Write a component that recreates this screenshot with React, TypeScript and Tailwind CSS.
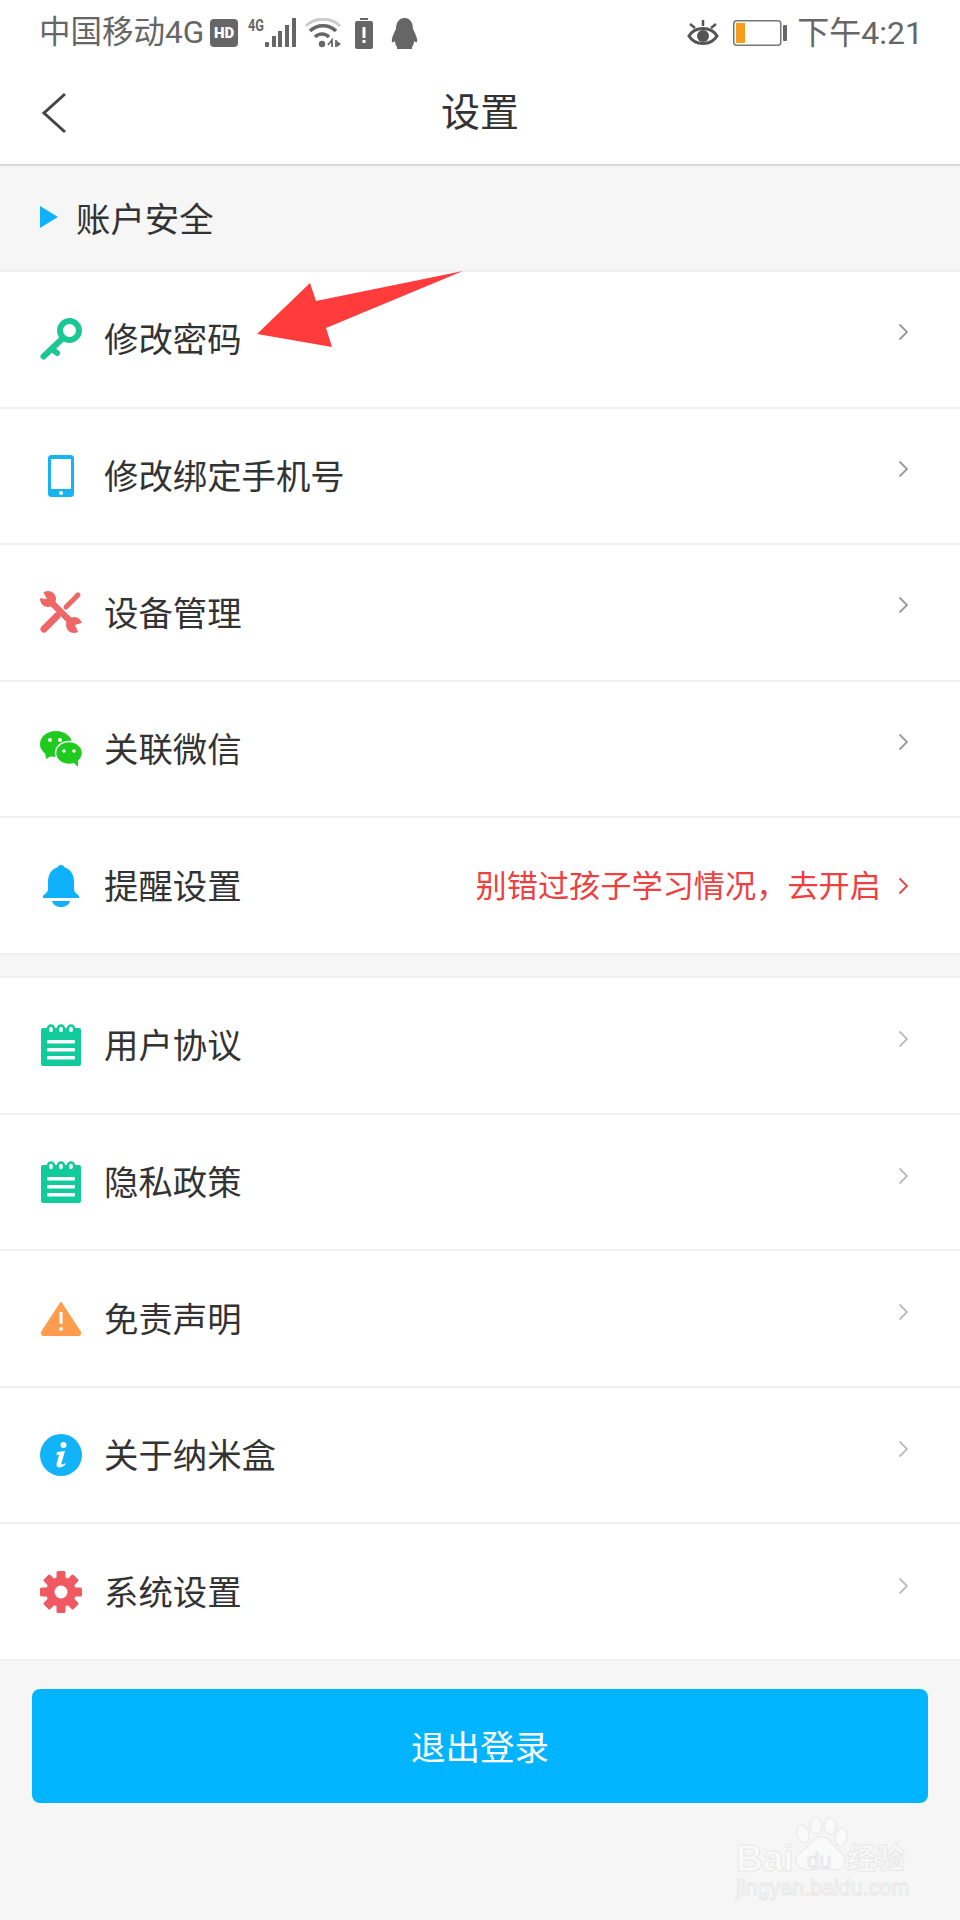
import React from 'react';

const cjk = { fontFamily: '"Noto Sans CJK SC", sans-serif' };

function HdIcon() {
  return (
    <div className="flex h-[28px] w-[28px] shrink-0 items-center justify-center rounded-[4px] bg-[#666] text-[15px] font-black leading-none text-white [font-family:Roboto,sans-serif]">
      HD
    </div>
  );
}

function SignalIcon() {
  return (
    <svg width="48" height="30" viewBox="0 0 48 30" className="shrink-0">
      <text x="0" y="13" fontSize="16" fontWeight="700" fill="#666" textLength="16" lengthAdjust="spacingAndGlyphs" fontFamily="Roboto, sans-serif">4G</text>
      <rect x="17" y="24" width="4" height="5" rx="1" fill="#666" />
      <rect x="24" y="18" width="4" height="11" fill="#666" />
      <rect x="30" y="13" width="4" height="16" fill="#666" />
      <rect x="37" y="7" width="4" height="22" fill="#666" />
      <rect x="44" y="0" width="4" height="29" fill="#666" />
    </svg>
  );
}

function WifiIcon() {
  return (
    <svg width="36" height="30" viewBox="0 0 36 30" fill="none" className="shrink-0">
      <path d="M1 8 C10 -1 26 -1 35 8" stroke="#ccc" strokeWidth="3" />
      <path d="M5 13 C12 6 24 6 31 13" stroke="#666" strokeWidth="3.5" />
      <path d="M10 19 C14 15 20 15 24 19" stroke="#666" strokeWidth="3.5" />
      <circle cx="17" cy="26" r="3.2" fill="#666" />
      <path d="M23 27 L27 22 L27 29 M31 22 L31 29" stroke="#666" strokeWidth="1.8" />
      <path d="M32 23 L36 26 L32 29 Z" fill="#666" />
    </svg>
  );
}

function ChargeIcon() {
  return (
    <svg width="18" height="31" viewBox="0 0 18 31" className="shrink-0">
      <rect x="5" y="0" width="8" height="2" fill="#666" />
      <rect x="0" y="3" width="18" height="28" rx="2" fill="#666" />
      <rect x="7.5" y="9" width="3" height="11" fill="#fff" />
      <rect x="7.5" y="22" width="3" height="3" fill="#fff" />
    </svg>
  );
}

function QqIcon() {
  return (
    <svg width="27" height="31" viewBox="0 0 27 31" className="shrink-0">
      <path d="M13.5 0 C20 0 22 6 22 11 C24 15 27 21 26 24 C25 25 23 23 23 23 C23 26 22 28 21 29 L21 31 L6 31 L6 29 C5 28 4 26 4 23 C4 23 2 25 1 24 C0 21 3 15 5 11 C5 6 7 0 13.5 0 Z" fill="#666" />
    </svg>
  );
}

function EyeIcon() {
  return (
    <svg width="32" height="28" viewBox="0 0 32 28" fill="none" className="shrink-0">
      <path d="M2 17 C8 7 24 7 30 17 C24 27 8 27 2 17 Z" stroke="#555" strokeWidth="3" />
      <circle cx="16" cy="17" r="6" fill="#555" />
      <path d="M16 1 V7 M3 5 L8 9 M29 5 L24 9" stroke="#555" strokeWidth="2.5" />
    </svg>
  );
}

function BatteryIcon() {
  return (
    <svg width="54" height="26" viewBox="0 0 54 26" className="shrink-0">
      <rect x="0.75" y="0.75" width="47" height="24.5" rx="3" fill="#fff" stroke="#777" strokeWidth="1.5" />
      <rect x="3" y="3" width="9" height="20" fill="#f59c1a" />
      <rect x="50" y="5" width="4" height="16" rx="1" fill="#666" />
    </svg>
  );
}

function KeyIcon() {
  return (
    <svg width="42" height="42" viewBox="0 0 42 42" fill="none">
      <circle cx="29.5" cy="12.5" r="9.5" stroke="#1cc796" strokeWidth="6" />
      <path d="M23 20 L3.5 38.5 M12 31 L17 35" stroke="#1cc796" strokeWidth="6" strokeLinecap="round" />
    </svg>
  );
}

function PhoneIcon() {
  return (
    <svg width="42" height="42" viewBox="0 0 42 42">
      <rect x="8" y="0" width="26" height="42" rx="3.5" fill="#14b4f5" />
      <rect x="11" y="4" width="20" height="30" fill="#fff" />
      <circle cx="21" cy="38" r="2" fill="#fff" />
    </svg>
  );
}

function ToolsIcon() {
  return (
    <svg width="42" height="42" viewBox="0 0 42 42" fill="none">
      <path d="M4 38 L17 25" stroke="#ee6666" strokeWidth="7" strokeLinecap="round" />
      <path d="M26 16 L38 4" stroke="#ee6666" strokeWidth="5" strokeLinecap="round" />
      <path d="M8 8 L34 34" stroke="#ee6666" strokeWidth="6.5" />
      <circle cx="8" cy="8" r="8" fill="#ee6666" />
      <circle cx="34" cy="34" r="8" fill="#ee6666" />
      <path d="M7 8 L2 -1 L-2 3 L-1 7 Z M35 34 L44 31 L42 40 L39 43 Z" fill="#fff" />
    </svg>
  );
}

function WechatIcon() {
  return (
    <svg width="42" height="36" viewBox="0 0 42 36">
      <ellipse cx="16" cy="13" rx="16" ry="13" fill="#1ecb1e" />
      <path d="M5 20 L6 28 L13 24 Z" fill="#1ecb1e" />
      <ellipse cx="29" cy="22" rx="13.5" ry="11.5" fill="#1ecb1e" stroke="#fff" strokeWidth="1.5" />
      <path d="M33 31 L38 36 L38 28 Z" fill="#1ecb1e" />
      <circle cx="10" cy="9" r="2" fill="#fff" />
      <circle cx="20" cy="9" r="2" fill="#fff" />
      <circle cx="24" cy="20" r="1.7" fill="#fff" />
      <circle cx="34" cy="20" r="1.7" fill="#fff" />
    </svg>
  );
}

function BellIcon() {
  return (
    <svg width="38" height="42" viewBox="0 0 38 42">
      <circle cx="19" cy="3.5" r="3.5" fill="#0fb1fb" />
      <path d="M19 2 C28 2 32 9 32 17 L32 24 C32 28 36 29 37 31 L37 33 L1 33 L1 31 C2 29 6 28 6 24 L6 17 C6 9 10 2 19 2 Z" fill="#0fb1fb" />
      <path d="M10 36 L28 36 C27 40 23 42 19 42 C15 42 11 40 10 36 Z" fill="#0fb1fb" />
    </svg>
  );
}

function NoteIcon() {
  return (
    <svg width="40" height="42" viewBox="0 0 40 42">
      <path d="M2 4 H38 A2 2 0 0 1 40 6 V40 A2 2 0 0 1 38 42 H2 A2 2 0 0 1 0 40 V6 A2 2 0 0 1 2 4 Z" fill="#12cb9c" />
      <g fill="#fff" stroke="#12cb9c" strokeWidth="2.5">
        <rect x="7" y="1.5" width="6" height="8" rx="3" />
        <rect x="17" y="1.5" width="6" height="8" rx="3" />
        <rect x="27" y="1.5" width="6" height="8" rx="3" />
      </g>
      <rect x="6" y="16" width="28" height="3.5" rx="1" fill="#fff" />
      <rect x="6" y="24" width="28" height="3.5" rx="1" fill="#fff" />
      <rect x="6" y="32" width="28" height="3.5" rx="1" fill="#fff" />
    </svg>
  );
}

function WarnIcon() {
  return (
    <svg width="42" height="36" viewBox="0 0 42 36">
      <path d="M21 2 L40 31 C41.5 34 40 36 38 36 L4 36 C2 36 0.5 34 2 31 Z" fill="#ff9c4d" stroke="#ff9c4d" strokeLinejoin="round" />
      <rect x="19.5" y="12" width="3" height="12" fill="#fff" />
      <circle cx="21" cy="29" r="2" fill="#fff" />
    </svg>
  );
}

function InfoIcon() {
  return (
    <svg width="42" height="42" viewBox="0 0 42 42">
      <circle cx="21" cy="21" r="21" fill="#12b3f8" />
      <circle cx="23.5" cy="11" r="3" fill="#fff" />
      <path d="M17 18 L25 17 L21.5 29 C21 31 23 31 25 29 L25.5 30.5 C22 34 16 35 16.5 30 L19 21 L16.5 21 Z" fill="#fff" />
    </svg>
  );
}

function GearIcon() {
  return (
    <svg width="42" height="42" viewBox="0 0 42 42">
      <g fill="#ef5a62">
        <rect x="16.5" y="0" width="9" height="42" rx="1.5" />
        <rect x="16.5" y="0" width="9" height="42" rx="1.5" transform="rotate(45 21 21)" />
        <rect x="16.5" y="0" width="9" height="42" rx="1.5" transform="rotate(90 21 21)" />
        <rect x="16.5" y="0" width="9" height="42" rx="1.5" transform="rotate(135 21 21)" />
        <circle cx="21" cy="21" r="15" />
      </g>
      <circle cx="21" cy="21" r="6.5" fill="#fff" />
    </svg>
  );
}

function Chevron({ color, up }: { color: string; up: string }) {
  return (
    <svg width="11" height="18" viewBox="0 0 11 18" fill="none" className={`shrink-0 ${up}`}>
      <path d="M1.5 1.5 L9 9 L1.5 16.5" stroke={color} strokeWidth="1.8" />
    </svg>
  );
}

type RowProps = {
  icon: React.ReactNode;
  label: string;
  hint?: string;
  chevron: string;
  chevronUp: string;
};

function Row({ icon, label, hint, chevron, chevronUp }: RowProps) {
  return (
    <div className="flex h-[136.6px] items-center bg-white pl-[40px] pr-[51px] border-b-2 border-[#f0f0f0]">
      <div className="flex w-[42px] shrink-0 justify-center">{icon}</div>
      <span className="mb-[2px] ml-[22px] text-[34.4px] text-[#333]">{label}</span>
      <div className="flex-1" />
      {hint && <span className="mb-[2px] mr-[17px] text-[31.2px] text-[#ee4040]">{hint}</span>}
      <Chevron color={chevron} up={chevronUp} />
    </div>
  );
}

function Watermark() {
  return (
    <div className="absolute left-[736px] top-[1816px] h-[84px] w-[176px]">
      <svg width="60" height="56" viewBox="0 0 60 54" fill="#fafafa" stroke="#ececec" strokeWidth="1.5" className="absolute left-[56px] top-0">
        <ellipse cx="11" cy="17" rx="6" ry="9" transform="rotate(-15 11 17)" />
        <ellipse cx="24" cy="9" rx="6" ry="8" />
        <ellipse cx="38" cy="9" rx="6" ry="8" />
        <ellipse cx="49" cy="20" rx="6" ry="9" transform="rotate(15 49 20)" />
        <path d="M4 46 C2 36 14 34 20 24 C25 18 34 18 39 25 C44 34 55 36 53 46 C52 54 40 54 30 51 C20 54 6 54 4 46 Z" />
      </svg>
      <span className="absolute left-0 top-[24px] text-[37px] font-bold leading-none text-[#fafafa] [-webkit-text-stroke:1px_#e8e8e8] [font-family:'Liberation_Sans',sans-serif]">Bai</span>
      <span className="absolute left-[71px] top-[34px] text-[22px] leading-none text-[#f6f6f6] [-webkit-text-stroke:1px_#e6e6e6] [font-family:'Liberation_Sans',sans-serif]">du</span>
      <span className="absolute left-[111px] top-[26px] text-[29px] font-bold leading-none text-[#fafafa] [-webkit-text-stroke:1px_#e8e8e8]">经验</span>
      <span className="absolute left-0 top-[62px] text-[21.5px] leading-none text-[#f9f9f9] [-webkit-text-stroke:1px_#e8e8e8] [font-family:'Liberation_Sans',sans-serif]">jingyan.baidu.com</span>
    </div>
  );
}

export default function App() {
  return (
    <div className="relative h-[1920px] w-[960px] overflow-hidden bg-[#f6f6f6]" style={cjk}>
      {/* 状态栏 */}
      <div className="flex h-[66px] items-center justify-between bg-white pl-[39px] pr-[37px] text-[#666]">
        <div className="flex items-center">
          <span className="text-[31.5px] leading-none [font-family:Roboto,'Noto_Sans_CJK_SC',sans-serif]">中国移动4G</span>
          <div className="ml-[6px]"><HdIcon /></div>
          <div className="ml-[10px]"><SignalIcon /></div>
          <div className="ml-[9px]"><WifiIcon /></div>
          <div className="ml-[14px]"><ChargeIcon /></div>
          <div className="ml-[18px]"><QqIcon /></div>
        </div>
        <div className="flex items-center">
          <EyeIcon />
          <div className="ml-[14px]"><BatteryIcon /></div>
          <span className="ml-[10px] text-[32px] leading-none [font-family:Roboto,'Noto_Sans_CJK_SC',sans-serif]">下午4:21</span>
        </div>
      </div>

      {/* 标题栏 */}
      <div className="relative flex h-[100px] items-center justify-center border-b-2 border-[#d8d8d8] bg-white pb-[12px]">
        <svg width="26" height="42" viewBox="0 0 26 42" fill="none" className="absolute left-[41px] top-[26px]">
          <path d="M24 2 L3 21 L24 40" stroke="#444" strokeWidth="3" />
        </svg>
        <span className="text-[39px] text-[#333]">设置</span>
      </div>

      {/* 账户安全 */}
      <div className="flex h-[106px] items-center border-b-2 border-[#f0f0f0] pl-[40px]">
        <svg width="18" height="22" viewBox="0 0 18 22" className="mb-[3px]">
          <path d="M0 0 L18 11 L0 22 Z" fill="#0fb1fb" />
        </svg>
        <span className="ml-[18px] text-[34.4px] text-[#333]">账户安全</span>
      </div>

      <Row icon={<KeyIcon />} label="修改密码" chevron="#999" chevronUp="-translate-y-[7px]" />
      <Row icon={<PhoneIcon />} label="修改绑定手机号" chevron="#999" chevronUp="-translate-y-[7px]" />
      <Row icon={<ToolsIcon />} label="设备管理" chevron="#999" chevronUp="-translate-y-[7px]" />
      <Row icon={<WechatIcon />} label="关联微信" chevron="#999" chevronUp="-translate-y-[7px]" />
      <Row icon={<BellIcon />} label="提醒设置" hint={'别错过孩子学习情况\uFF0C去开启'} chevron="#ee4040" chevronUp="" />

      <div className="h-[23px] border-b-2 border-[#f0f0f0]" />

      <Row icon={<NoteIcon />} label="用户协议" chevron="#bbb" chevronUp="-translate-y-[6px]" />
      <Row icon={<NoteIcon />} label="隐私政策" chevron="#bbb" chevronUp="-translate-y-[6px]" />
      <Row icon={<WarnIcon />} label="免责声明" chevron="#bbb" chevronUp="-translate-y-[6px]" />
      <Row icon={<InfoIcon />} label="关于纳米盒" chevron="#bbb" chevronUp="-translate-y-[6px]" />
      <Row icon={<GearIcon />} label="系统设置" chevron="#bbb" chevronUp="-translate-y-[6px]" />

      <div className="px-[32px] pt-[28px]">
        <button className="flex h-[114px] w-full items-center justify-center rounded-[8px] bg-[#00b4ff] text-[34.5px] text-white">
          退出登录
        </button>
      </div>

      <Watermark />

      {/* 标注箭头 */}
      <svg width="240" height="90" viewBox="0 0 240 90" className="absolute left-[250px] top-[266px]">
        <path d="M7 68 L60 17 L66 35 L213 5 L76 62 L82 81 Z" fill="#ff3b3b" />
      </svg>
    </div>
  );
}
